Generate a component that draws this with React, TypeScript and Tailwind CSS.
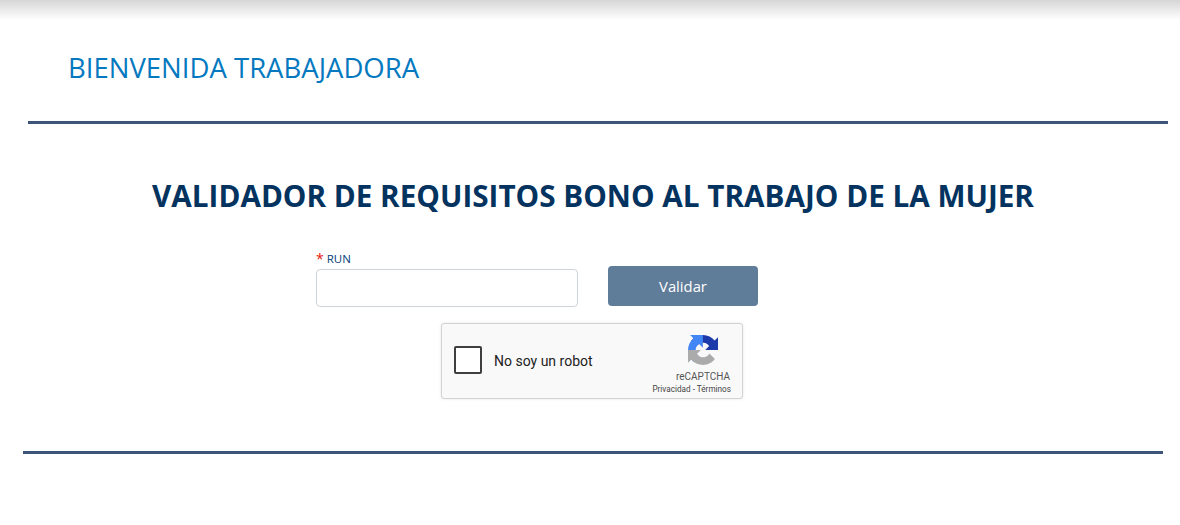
function RecaptchaLogo() {
  return (
    <svg width="30" height="30" viewBox="0 0 64 64" className="block">
      <path d="M64 31.955l-.033-1.37V4.687l-7.16 7.16C50.948 4.674 42.033.093 32.05.093c-10.4 0-19.622 4.96-25.458 12.64l11.736 11.86a15.55 15.55 0 0 1 4.754-5.334c2.05-1.6 4.952-2.906 8.968-2.906.485 0 .86.057 1.135.163 4.976.393 9.288 3.14 11.828 7.124l-8.307 8.307c10.522-.04 22.41-.066 27.295.005" fill="#1c3aa9" />
      <path d="M31.862.094l-1.37.033H4.594l7.16 7.16C4.58 13.147 0 22.06 0 32.046c0 10.4 4.96 19.622 12.64 25.458l11.86-11.736a15.55 15.55 0 0 1-5.334-4.754c-1.6-2.05-2.906-4.952-2.906-8.968 0-.485.057-.86.163-1.135.393-4.976 3.14-9.288 7.124-11.828l8.307 8.307c-.04-10.522-.066-22.41.005-27.295" fill="#4285f4" />
      <path d="M.001 32.045l.033 1.37v25.898l7.16-7.16c5.86 7.173 14.774 11.754 24.76 11.754 10.4 0 19.622-4.96 25.458-12.64L45.676 39.407a15.55 15.55 0 0 1-4.754 5.334c-2.05 1.6-4.952 2.906-8.968 2.906-.485 0-.86-.057-1.135-.163-4.976-.393-9.288-3.14-11.828-7.124l8.307-8.307c-10.522.04-22.41.066-27.295-.005" fill="#ababab" />
    </svg>
  );
}

export default function App() {
  return (
    <div className="h-[525px] w-full overflow-hidden bg-white font-['Open_Sans','Noto_Sans',sans-serif]">
      <div className="h-5 bg-gradient-to-b from-[#d6d6d6] to-white" />

      <div className="h-[101px] pl-[68px] pt-[32px]">
        <h1 className="text-[27.5px] leading-[32px] text-[#0579bf]">BIENVENIDA TRABAJADORA</h1>
      </div>
      <div className="ml-[28px] h-[3px] w-[1140px] bg-[#3b5478]" />

      <h2 className="mt-[54px] pl-[6px] text-center text-[29.7px] leading-[36px] font-bold text-[#04335f]">
        VALIDADOR DE REQUISITOS BONO AL TRABAJO DE LA MUJER
      </h2>

      <div className="mt-[37px] ml-[316px] flex items-end gap-[30px]">
        <div>
          <label className="flex h-[18px] items-center gap-[3px] pb-[2px] text-[11.5px] leading-[16px] text-[#04407a]">
            <span className="text-[14px] text-[#e8140c]">*</span>
            RUN
          </label>
          <input className="block h-[38px] w-[262px] rounded border border-[#cfd4dc] bg-white" />
        </div>
        <button className="mb-[1px] h-[40px] w-[150px] rounded bg-[#5f7c99] text-[14.8px] font-medium text-white">
          Validar
        </button>
      </div>

      <div className="mt-[16px] ml-[441px] flex h-[76px] w-[302px] items-start rounded-[3px] border border-[#d3d3d3] bg-[#f9f9f9] font-['Roboto',sans-serif] shadow-[0_0_3px_rgba(0,0,0,0.1)]">
        <div className="mt-[22px] ml-[12px] h-[28px] w-[28px] rounded-[2px] border-2 border-[#3f3f3f] bg-white" />
        <span className="mt-[28px] ml-[12px] text-[14px] leading-[18px] text-[#222]">No soy un robot</span>
        <div className="mr-[11px] ml-auto flex flex-col items-end pt-[11px]">
          <div className="mr-[13px]">
            <RecaptchaLogo />
          </div>
          <span className="mt-[6px] mr-[1px] text-[10px] leading-[12px] text-[#555]">reCAPTCHA</span>
          <span className="mt-[1px] text-[8.2px] leading-[11px] whitespace-nowrap text-[#444]">Privacidad - Términos</span>
        </div>
      </div>

      <div className="mt-[52px] ml-[23px] h-[3px] w-[1140px] bg-[#3b5478]" />
    </div>
  );
}
